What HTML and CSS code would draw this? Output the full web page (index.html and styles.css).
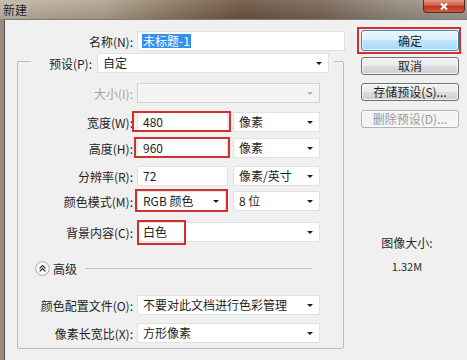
FILE: index.html
```html
<!DOCTYPE html>
<html lang="zh-CN">
<head>
    <meta charset="UTF-8">
    <link rel="stylesheet" href="styles.css">
    <title>新建</title>
</head>
<body>
<div class="window">
    <div class="titlebar">
        <span class="title">新建</span>
        <span class="close">
            <svg width="12" height="9" viewBox="0 0 12 9"><path d="M3 1.5 L9 7.5 M9 1.5 L3 7.5" stroke="#fff" stroke-width="2"/></svg>
        </span>
    </div>
    <div class="frame">
        <div class="main">
            <div class="row name_row">
                <span class="lbl name_lbl">名称(N):</span>
                <div class="field name_field"><span class="sel_text">未标题-1</span></div>
            </div>

            <div class="group">
                <div class="row preset_row">
                    <span class="lbl preset_lbl">预设(P):</span>
                    <div class="field combo preset_combo">自定<span class="arrow"></span></div>
                </div>
                <div class="row size_row">
                    <span class="lbl lbl_disabled">大小(I):</span>
                    <div class="field combo combo_disabled wide">&nbsp;<span class="arrow"></span></div>
                </div>
                <div class="row width_row">
                    <span class="lbl">宽度(W):</span>
                    <div class="field num">480<span class="mark mark_width"></span></div>
                    <div class="field combo unit">像素<span class="arrow"></span></div>
                </div>
                <div class="row height_row">
                    <span class="lbl">高度(H):</span>
                    <div class="field num">960<span class="mark mark_height"></span></div>
                    <div class="field combo unit">像素<span class="arrow"></span></div>
                </div>
                <div class="row res_row">
                    <span class="lbl">分辨率(R):</span>
                    <div class="field num">72</div>
                    <div class="field combo unit">像素/英寸<span class="arrow"></span></div>
                </div>
                <div class="row mode_row">
                    <span class="lbl">颜色模式(M):</span>
                    <div class="field combo mode">RGB 颜色<span class="arrow"></span><span class="mark mark_mode"></span></div>
                    <div class="field combo unit">8 位<span class="arrow"></span></div>
                </div>
                <div class="row bg_row">
                    <span class="lbl">背景内容(C):</span>
                    <div class="field combo wide">白色<span class="arrow"></span><span class="mark mark_bg"></span></div>
                </div>

                <div class="adv_row">
                    <svg class="adv_icon" width="15" height="15" viewBox="0 0 15 15">
                        <circle cx="7.5" cy="7.5" r="6.8" fill="#fbfbfb" stroke="#a8a8a8"/>
                        <path d="M4.6 7.4 L7.5 4.6 L10.4 7.4 M4.6 10.4 L7.5 7.6 L10.4 10.4" fill="none" stroke="#2a2a2a" stroke-width="1.3"/>
                    </svg>
                    <span class="adv_text">高级</span>
                    <span class="adv_line"></span>
                </div>

                <div class="row profile_row">
                    <span class="lbl">颜色配置文件(O):</span>
                    <div class="field combo wide">不要对此文档进行色彩管理<span class="arrow"></span></div>
                </div>
                <div class="row aspect_row">
                    <span class="lbl">像素长宽比(X):</span>
                    <div class="field combo wide">方形像素<span class="arrow"></span></div>
                </div>
            </div>
        </div>

        <div class="side">
            <div class="btn btn_default btn_ok">确定<span class="mark mark_ok"></span></div>
            <div class="btn btn_cancel">取消</div>
            <div class="btn btn_save">存储预设(S)...</div>
            <div class="btn btn_disabled btn_delete">删除预设(D)...</div>

            <div class="info">
                <div class="info_title">图像大小:</div>
                <div class="info_value">1.32M</div>
            </div>
        </div>
    </div>
</div>
</body>
</html>
```
FILE: styles.css
```css
body, html {
    margin: 0;
    padding: 0;
    background: #f0f0f0;
    font-family: "Noto Sans CJK SC", "DejaVu Sans", sans-serif;
    font-size: 12px;
    color: #1e1e1e;
}

.window {
    width: 467px;
    height: 360px;
    overflow: hidden;
    display: flex;
    flex-direction: column;
}

/* Заголовок окна */

.titlebar {
    height: 19px;
    flex-shrink: 0;
    display: flex;
    align-items: flex-start;
    background:
        linear-gradient(rgba(255, 255, 255, 0.08), rgba(0, 0, 0, 0.12)),
        linear-gradient(90deg, #c3b7a7 0%, #b3a592 22%, #8d7762 38%, #6f5745 52%, #7b6757 68%, #988c81 85%, #a69e97 100%);
}
.title {
    margin: 1px 0 0 3px;
    line-height: 17px;
    color: #1a1a1a;
    text-shadow: 0 0 4px rgba(255, 255, 255, 0.6);
}
.close {
    margin-left: auto;
    margin-right: 2px;
    width: 40px;
    height: 12px;
    display: flex;
    align-items: center;
    justify-content: center;
    border: 1px solid #5b2a22;
    border-top: 0;
    border-radius: 0 0 4px 4px;
    background: linear-gradient(#e19a8a 0%, #cf5a45 45%, #b63820 55%, #d25a3c 100%);
}

/* Тело окна */

.frame {
    flex: 1;
    display: flex;
    border-left: 4px solid #9a8d7e;
}
.main {
    width: 345px;
    border-left: 1px solid #4f4f4f;
    border-top: 1px solid #7c7c7c;
}
.side {
    width: 117px;
    border-top: 1px solid #7c7c7c;
    display: flex;
    flex-direction: column;
}

/* Строки формы */

.row {
    display: flex;
    align-items: center;
    height: 20px;
}
.lbl {
    width: 115px;
    margin-right: 4px;
    text-align: right;
    white-space: nowrap;
}
.lbl_disabled {
    color: #a3a3a3;
}
.name_row {
    margin-top: 11px;
}
.name_lbl {
    width: 128px;
}

.field {
    position: relative;
    height: 20px;
    box-sizing: border-box;
    background: #fff;
    border: 1px solid #e1e1e1;
    padding: 0 6px 0 5px;
    line-height: 18px;
    white-space: nowrap;
}
.combo {
    display: flex;
    align-items: center;
    justify-content: space-between;
}
.arrow {
    width: 0;
    height: 0;
    border-left: 3px solid transparent;
    border-right: 3px solid transparent;
    border-top: 3px solid #1e1e1e;
    margin-top: 1px;
}
.combo_disabled {
    background: #f4f4f4;
    border-color: #d2d2d2;
}
.combo_disabled .arrow {
    border-top-color: #b4b4b4;
}

.name_field {
    width: 208px;
    padding-left: 4px;
}
.sel_text {
    display: inline-block;
    background: #3390f0;
    color: #fff;
    line-height: 14px;
    padding: 0 1px;
}

.wide {
    width: 183px;
}
.num {
    width: 91px;
}
.mode {
    width: 89px;
    margin-right: 7px;
}
.num + .unit {
    margin-left: 5px;
}
.unit {
    width: 87px;
}

/* Группа предустановок */

.group {
    margin: 10px 0 0 12px;
    width: 327px;
    box-sizing: border-box;
    border: 1px solid #bcbcbc;
    border-radius: 2px;
    padding-bottom: 5px;
}
.preset_row {
    margin: -9px 9px 0 13px;
    background: #f0f0f0;
}
.preset_lbl {
    width: 61px;
    margin-right: 5px;
}
.preset_combo {
    width: 232px;
}

.size_row { margin-top: 10px; }
.width_row { margin-top: 9px; }
.height_row { margin-top: 6px; }
.res_row { margin-top: 8px; }
.mode_row { margin-top: 5px; }
.bg_row { margin-top: 11px; }
.profile_row { margin-top: 19px; }
.aspect_row { margin-top: 8px; }

.adv_row {
    display: flex;
    align-items: center;
    height: 16px;
    margin: 18px 31px 0 17px;
}
.adv_text {
    margin-left: 3px;
}
.adv_line {
    flex: 1;
    height: 1px;
    margin-left: 8px;
    background: #c4c4c4;
}

/* Красные рамки-пометки */

.mark {
    position: absolute;
    border: 2px solid #d22f2f;
    pointer-events: none;
}
.mark_width { left: -6px; right: -4px; top: -2px; bottom: -1px; }
.mark_height { left: -4px; right: -3px; top: -2px; bottom: -1px; }
.mark_mode { left: -3px; right: -3px; top: -3px; bottom: -2px; }
.mark_bg { left: -1px; width: 45px; top: -3px; bottom: -4px; }
.mark_ok { left: -5px; right: -3px; top: -4px; bottom: -4px; }

/* Кнопки */

.btn {
    position: relative;
    width: 98px;
    height: 18px;
    margin-left: 11px;
    box-sizing: border-box;
    border: 1px solid #707070;
    border-radius: 3px;
    background: linear-gradient(#f2f2f2 0%, #ebebeb 50%, #dddddd 50%, #cfcfcf 100%);
    box-shadow: inset 0 0 0 1px rgba(255, 255, 255, 0.7);
    text-align: center;
    line-height: 16px;
}
.btn_default {
    height: 21px;
    line-height: 19px;
    border-color: #3c7fb1;
    background: linear-gradient(#eaf6fd 0%, #d9f0fc 50%, #bee6fd 50%, #a7d9f5 100%);
}
.btn_disabled {
    border-color: #adb2b5;
    background: #f4f4f4;
    color: #9a9a9a;
}
.btn_ok { margin-top: 10px; }
.btn_cancel { margin-top: 6px; }
.btn_save { margin-top: 8px; }
.btn_delete { margin-top: 9px; }

.info {
    margin-top: 107px;
    text-align: center;
    padding-right: 3px;
    color: #2a2a2a;
}
.info_title {
    line-height: 16px;
}
.info_value {
    margin-top: 7px;
    line-height: 16px;
    font-size: 11px;
}
```
